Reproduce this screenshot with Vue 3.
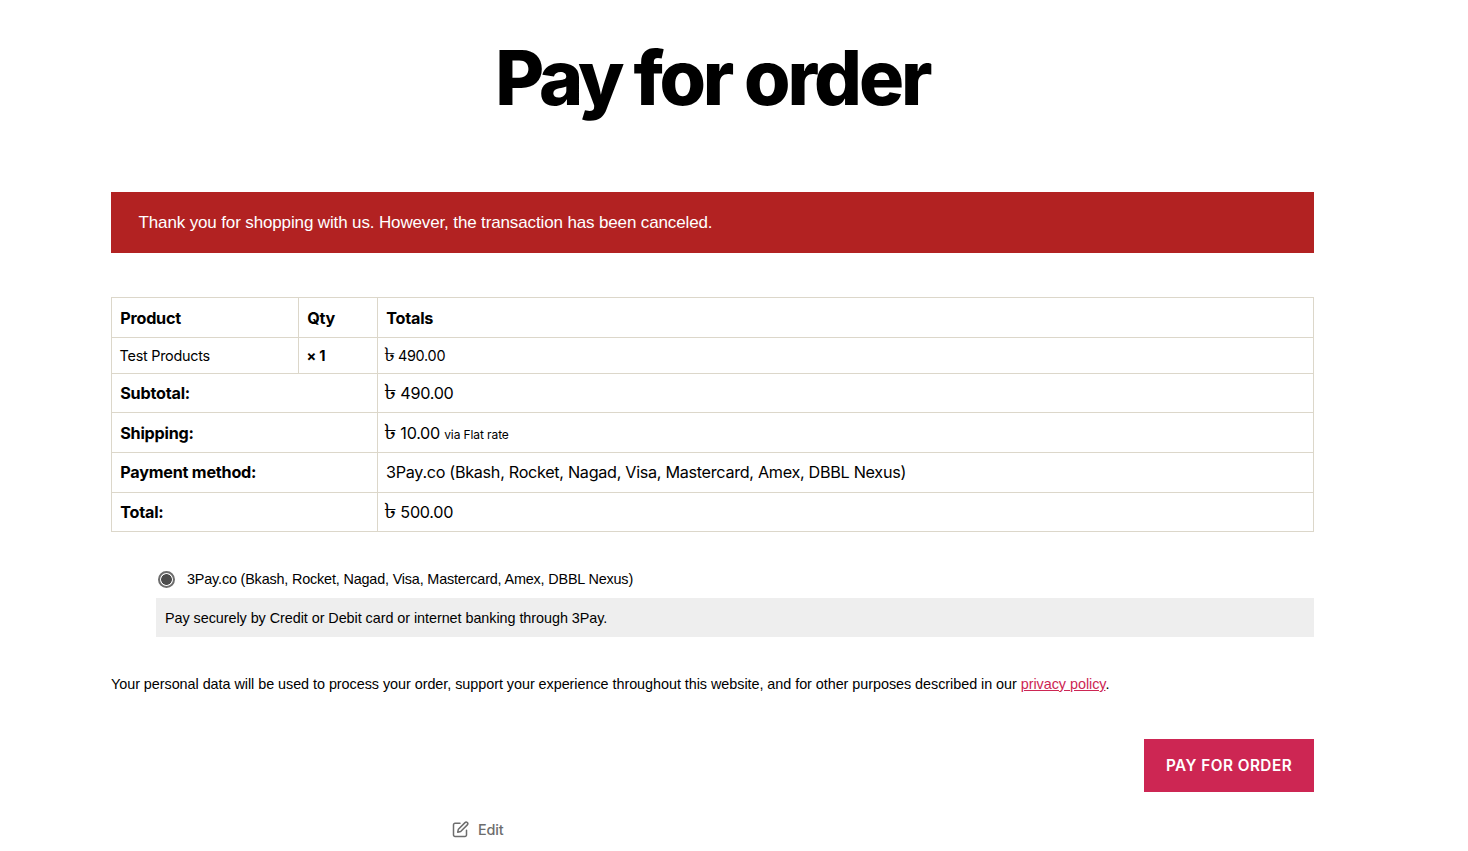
<script setup>
const methods = '3Pay.co (Bkash, Rocket, Nagad, Visa, Mastercard, Amex, DBBL Nexus)'
const totals = [
  { label: 'Subtotal:', amount: '490.00', cls: 'r39 up' },
  { label: 'Shipping:', amount: '10.00', note: 'via Flat rate', cls: 'r40 noted' },
  { label: 'Payment method:', text: methods, cls: 'r40 up' },
  { label: 'Total:', amount: '500.00', cls: 'r39 up' },
]
</script>

<template>
  <main class="page">
    <h1 class="title"><span class="tight">Pay</span> for <span class="loose">order</span></h1>
    <div class="notice"><span>Thank you for shopping with us. However, the transaction has been canceled.</span></div>
    <table class="order">
      <colgroup><col class="c1" /><col class="c2" /><col /></colgroup>
      <thead>
        <tr class="r40"><th>Product</th><th>Qty</th><th>Totals</th></tr>
      </thead>
      <tbody>
        <tr class="r36 item"><td>Test Products</td><td><strong>× 1</strong></td><td><span class="taka">৳</span>&nbsp;490.00</td></tr>
      </tbody>
      <tfoot>
        <tr v-for="row in totals" :key="row.label" :class="row.cls">
          <th colspan="2">{{ row.label }}</th>
          <td>
            <template v-if="row.amount"><span class="taka">৳</span>&nbsp;{{ row.amount }}</template>
            <template v-else>{{ row.text }}</template>
            <small v-if="row.note">&nbsp;{{ row.note }}</small>
          </td>
        </tr>
      </tfoot>
    </table>
    <section class="payment">
      <label class="method"><span class="radio"></span><span>{{ methods }}</span></label>
      <div class="box"><span>Pay securely by Credit or Debit card or internet banking through 3Pay.</span></div>
    </section>
    <p class="privacy"><span>Your personal data will be used to process your order, support your experience throughout this website, and for other purposes described in our <a>privacy policy</a>.</span></p>
    <div class="actions"><button class="pay" type="button">PAY FOR ORDER</button></div>
    <div class="edit">
      <svg width="17" height="17" viewBox="0 0 17 17" fill="none" stroke="#6d6d6d" stroke-width="1.5" stroke-linecap="round" stroke-linejoin="round">
        <path d="M8 2.3H3A1.5 1.5 0 0 0 1.5 3.8V14A1.5 1.5 0 0 0 3 15.5H13A1.5 1.5 0 0 0 14.5 14V9.2" />
        <path d="M13 1.6A1.6 1.6 0 0 1 15.3 3.9L8.7 10.5L5.7 11.2L6.4 8.2Z" />
      </svg>
      <span>Edit</span>
    </div>
  </main>
</template>

<style>
body { background: #fff; overflow: hidden; }
</style>

<style scoped>
.page {
  box-sizing: border-box;
  width: 1468px;
  height: 851px;
  padding: 36px 154px 0 111px;
  color: #000;
  font-family: "Liberation Sans", Arial, sans-serif;
  white-space: nowrap;
  overflow: hidden;
}
.title {
  margin: 0 0 72px;
  height: 84px;
  line-height: 84px;
  font-family: Inter, sans-serif;
  font-size: 75.2px;
  font-weight: 800;
  letter-spacing: -3.4px;
  text-align: center;
}
.tight { letter-spacing: -3.95px; }
.loose { letter-spacing: -3px; }
.notice {
  height: 61px;
  margin-bottom: 44px;
  box-sizing: border-box;
  padding-left: 27.5px;
  background: #b22222;
  color: #fff;
  font-size: 17px;
  letter-spacing: -0.135px;
  line-height: 61px;
}
.order {
  width: 1203px;
  table-layout: fixed;
  border-collapse: collapse;
  font-family: Inter, sans-serif;
  font-size: 16.2px;
  line-height: 20px;
}
.c1 { width: 187px; }
.c2 { width: 79px; }
.order th, .order td {
  border: 1px solid #dcd7ca;
  padding: 1px 8px 0 8px;
  text-align: left;
  vertical-align: middle;
  font-weight: 400;
  letter-spacing: -0.3px;
}
.order th { font-weight: 700; letter-spacing: -0.22px; padding-left: 8.2px; }
.order .item td { font-size: 14.4px; padding-left: 7.6px; letter-spacing: -0.25px; }
.order .up th, .order .up td { padding-top: 0; padding-bottom: 1px; }
.order .noted td { padding-top: 2px; }
.taka {
  display: inline-block;
  margin-right: 0.9px;
  font-size: 1.3em;
  line-height: 0;
  letter-spacing: -0.8px;
  transform: translateX(-0.5px) scaleX(1.2);
  transform-origin: right;
}
.item .taka { margin-right: 0.3px; }
.r36 { height: 36px; }
.r39 { height: 39px; }
.r40 { height: 40px; }
small { margin-left: 1px; font-size: 12px; letter-spacing: -0.1px; }
.payment { padding: 30px 0 0 45px; font-size: 14.4px; }
.method { display: flex; align-items: center; height: 34px; gap: 12px; padding-left: 2px; margin-bottom: 2px; letter-spacing: -0.17px; }
.radio {
  box-sizing: border-box;
  width: 17px;
  height: 17px;
  border: 2px solid #6d6d6d;
  border-radius: 50%;
  background: radial-gradient(circle, #4d4d4d 5px, #fff 5.7px);
}
.box { height: 39px; line-height: 40px; background: #eee; padding-left: 9px; letter-spacing: -0.055px; }
.privacy { margin: 37px 0 0; height: 20px; line-height: 20px; font-size: 14.4px; letter-spacing: -0.045px; }
.privacy a { color: #cd2653; text-decoration: underline; }
.actions { display: flex; justify-content: flex-end; margin-top: 45px; }
.pay {
  width: 170px;
  height: 53px;
  padding: 0;
  border: 0;
  background: #cd2653;
  color: #fff;
  font-family: Inter, sans-serif;
  font-size: 15.3px;
  font-weight: 600;
  letter-spacing: 0.48px;
}
.edit {
  display: flex;
  align-items: center;
  gap: 9px;
  height: 20px;
  margin: 27px 0 0 341px;
  color: #6d6d6d;
  font-family: Inter, sans-serif;
  font-size: 14.4px;
  font-weight: 500;
  letter-spacing: -0.15px;
}
</style>
